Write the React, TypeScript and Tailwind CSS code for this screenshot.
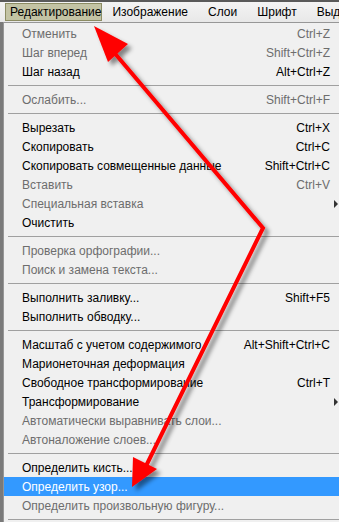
import React from "react";

type Item =
  | { sep: true }
  | { sep?: false; label: string; keys?: string; off?: boolean; sub?: boolean; active?: boolean };

const ITEMS: Item[] = [
  { label: "Отменить", keys: "Ctrl+Z", off: true },
  { label: "Шаг вперед", keys: "Shift+Ctrl+Z", off: true },
  { label: "Шаг назад", keys: "Alt+Ctrl+Z" },
  { sep: true },
  { label: "Ослабить...", keys: "Shift+Ctrl+F", off: true },
  { sep: true },
  { label: "Вырезать", keys: "Ctrl+X" },
  { label: "Скопировать", keys: "Ctrl+C" },
  { label: "Скопировать совмещенные данные", keys: "Shift+Ctrl+C" },
  { label: "Вставить", keys: "Ctrl+V", off: true },
  { label: "Специальная вставка", off: true, sub: true },
  { label: "Очистить" },
  { sep: true },
  { label: "Проверка орфографии...", off: true },
  { label: "Поиск и замена текста...", off: true },
  { sep: true },
  { label: "Выполнить заливку...", keys: "Shift+F5" },
  { label: "Выполнить обводку..." },
  { sep: true },
  { label: "Масштаб с учетом содержимого", keys: "Alt+Shift+Ctrl+C" },
  { label: "Марионеточная деформация" },
  { label: "Свободное трансформирование", keys: "Ctrl+T" },
  { label: "Трансформирование", sub: true },
  { label: "Автоматически выравнивать слои...", off: true },
  { label: "Автоналожение слоев...", off: true },
  { sep: true },
  { label: "Определить кисть..." },
  { label: "Определить узор...", active: true },
  { label: "Определить произвольную фигуру...", off: true },
  { sep: true },
];

const MENUBAR = ["Изображение", "Слои", "Шрифт", "Выделение"];

function Row({ item }: { item: Item }) {
  if (item.sep) {
    return (
      <div className="h-[9px] flex items-center pl-[4px]">
        <div className="w-full h-px bg-[#a0a0a0]" />
      </div>
    );
  }
  const color = item.active ? "text-white" : item.off ? "text-[#6d6d6d]" : "text-black";
  return (
    <div
      className={`h-[19px] flex items-center pl-[18px] pr-[9px] relative ${
        item.active ? "bg-[#3399ff]" : ""
      } ${color}`}
    >
      <span className="flex-1 whitespace-nowrap">{item.label}</span>
      {item.keys && <span className="whitespace-nowrap">{item.keys}</span>}
      {item.sub && (
        <span className="absolute right-[1px] top-[6px] w-0 h-0 border-y-[4px] border-y-transparent border-l-[4px] border-l-[#333]" />
      )}
    </div>
  );
}

function Arrows() {
  return (
    <svg
      className="absolute inset-0 pointer-events-none"
      width={339}
      height={522}
      viewBox="0 0 339 522"
    >
      <defs>
        <filter id="sh" x="-20%" y="-20%" width="140%" height="140%">
          <feDropShadow dx="4" dy="4" stdDeviation="2" floodColor="#000" floodOpacity="0.45" />
        </filter>
      </defs>
      <g filter="url(#sh)" fill="#ff0000" stroke="#ff0000">
        <polyline
          points="112,50 263,228 146,466"
          fill="none"
          strokeWidth="4"
          strokeLinejoin="miter"
        />
        <polygon points="94,26 128,44 108,62" stroke="none" />
        <polygon points="132,487 133,457 157,469" stroke="none" />
      </g>
    </svg>
  );
}

export default function App() {
  return (
    <div
      className="relative w-[339px] h-[522px] overflow-hidden bg-[#f0f0f0] text-[12px] leading-none"
      style={{ fontFamily: '"Liberation Sans", Arial, sans-serif' }}
    >
      {/* menu bar */}
      <div className="h-[22px] flex items-center bg-gradient-to-b from-[#f4f4f4] to-[#e8e8e8] border-t-2 border-[#5a5a5a] pl-[5px] whitespace-nowrap">
        <div className="w-[104px] h-[18px] pl-[4px] flex items-center bg-[#c3c3a4] border border-[#8c8c64] text-black">
          Редактирование
        </div>
        {MENUBAR.map((m) => (
          <div key={m} className="px-[10px] text-black">
            {m}
          </div>
        ))}
      </div>

      {/* dropdown */}
      <div className="flex">
        <div className="w-[3px] bg-[#7a7a7a]" />
        <div className="flex-1 border-l border-t border-[#979797] pt-[1px]">
          {ITEMS.map((it, i) => (
            <Row key={i} item={it} />
          ))}
        </div>
      </div>

      <Arrows />
    </div>
  );
}
